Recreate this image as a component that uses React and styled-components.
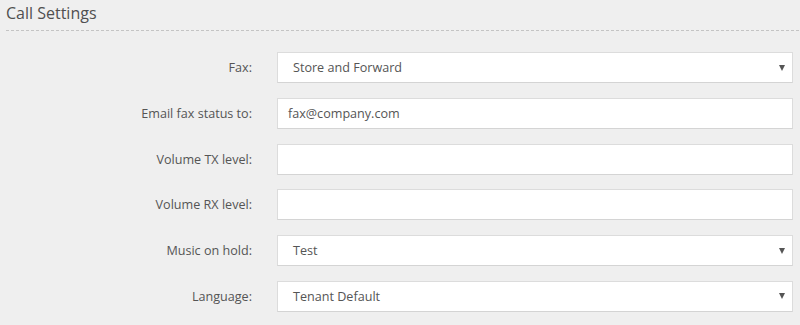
import React from "react";
import styled, { createGlobalStyle } from "styled-components";

const Global = createGlobalStyle`
  html, body { margin: 0; padding: 0; }
  body {
    background: #efefef;
    font-family: "Open Sans", "Liberation Sans", sans-serif;
    color: #555;
  }
`;

const Page = styled.div`
  width: 800px;
  height: 325px;
  overflow: hidden;
  background: #efefef;
`;

const Title = styled.h2`
  margin: 0;
  padding: 2px 0 0 6px;
  height: 28px;
  box-sizing: border-box;
  font-size: 16px;
  font-weight: 400;
  line-height: 22px;
  color: #505050;
`;

const Divider = styled.div`
  margin-left: 6px;
  height: 1px;
  background: repeating-linear-gradient(to right, #c4c4c4 0 3px, transparent 3px 5px);
  margin-top: 2px;
`;

const Form = styled.div`
  display: grid;
  grid-template-columns: 252px 1fr;
  column-gap: 25px;
  row-gap: 14.8px;
  padding: 21px 7px 0 0;
`;

const Label = styled.label`
  display: flex;
  align-items: center;
  justify-content: flex-end;
  font-size: 12.6px;
  color: #555;
  height: 31px;
`;

const Field = styled.div`
  position: relative;
  height: 31px;
  box-sizing: border-box;
  background: #fff;
  border: 1px solid #dcdcdc;
  border-bottom-color: #d4d4d4;
  display: flex;
  align-items: center;
  padding-left: ${(p) => (p.$select ? "15px" : "10px")};
  font-size: 12.6px;
  color: #555;
`;

const Arrow = styled.span`
  position: absolute;
  right: 7px;
  top: 50%;
  transform: translateY(-50%);
  width: 0;
  height: 0;
  border-left: 3px solid transparent;
  border-right: 3px solid transparent;
  border-top: 6px solid #555;
`;

const rows = [
  { label: "Fax:", value: "Store and Forward", select: true },
  { label: "Email fax status to:", value: "fax@company.com" },
  { label: "Volume TX level:", value: "" },
  { label: "Volume RX level:", value: "" },
  { label: "Music on hold:", value: "Test", select: true },
  { label: "Language:", value: "Tenant Default", select: true },
];

export default function App() {
  return (
    <Page>
      <Global />
      <Title>Call Settings</Title>
      <Divider />
      <Form>
        {rows.map((r) => (
          <React.Fragment key={r.label}>
            <Label>{r.label}</Label>
            <Field $select={r.select}>
              {r.value}
              {r.select && <Arrow />}
            </Field>
          </React.Fragment>
        ))}
      </Form>
    </Page>
  );
}
